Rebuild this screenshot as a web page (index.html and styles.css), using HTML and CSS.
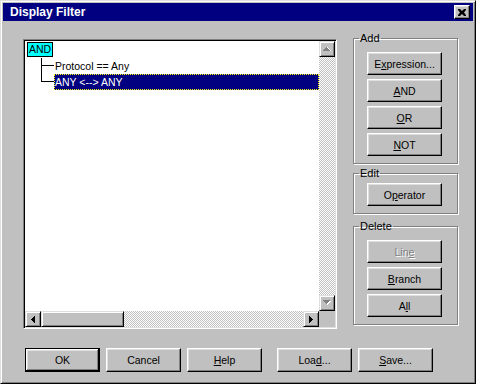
FILE: index.html
```html
<!DOCTYPE html>
<html lang="en">
<head>
    <meta charset="UTF-8">
    <meta name="viewport" content="width=device-width, initial-scale=1.0">
    <title>Display Filter</title>
    <link rel="stylesheet" href="styles.css">
</head>
<body>

<div class="window">
    <div class="titlebar">
        <span class="title">Display Filter</span>
        <button class="close-btn" aria-label="Close">
            <svg width="8" height="7" viewBox="0 0 8 7">
                <path d="M0 0h2l2 2 2-2h2v1L6 3.5 8 6v1H6L4 5 2 7H0V6l2-2.5L0 1z" fill="#000"/>
            </svg>
        </button>
    </div>

    <div class="dialog-body">
        <div class="main-row">
            <div class="tree-view">
                <div class="tree">
                    <div class="tree-row root-row"><span class="root-label">AND</span></div>
                    <div class="tree-row child">
                        <span class="label">Protocol == Any</span>
                    </div>
                    <div class="tree-row child last">
                        <span class="label selected">ANY &lt;--&gt; ANY</span>
                    </div>
                </div>

                <div class="vscroll">
                    <div class="scroll-btn">
                        <svg width="9" height="6" viewBox="0 0 9 6">
                            <path d="M4 1h1v1h1v1h1v1h1v1H1V4h1V3h1V2h1z" fill="#fff"/>
                            <path d="M3 1h1v1h1v1h1v1h1v1H0V4h1V3h1V2h1z" fill="#808080"/>
                        </svg>
                    </div>
                    <div class="track"></div>
                    <div class="scroll-btn">
                        <svg width="9" height="6" viewBox="0 0 9 6">
                            <path d="M1 1h7v1H7v1H6v1H5v1H4V4H3V3H2V2H1z" fill="#fff"/>
                            <path d="M0 0h7v1H6v1H5v1H4v1H3V3H2V2H1V1H0z" fill="#808080"/>
                        </svg>
                    </div>
                </div>

                <div class="hscroll">
                    <div class="scroll-btn">
                        <svg width="4" height="7" viewBox="0 0 4 7">
                            <path d="M3 0h1v7H3V6H2V5H1V4H0V3h1V2h1V1h1z" fill="#000"/>
                        </svg>
                    </div>
                    <div class="thumb"></div>
                    <div class="track"></div>
                    <div class="scroll-btn">
                        <svg width="4" height="7" viewBox="0 0 4 7">
                            <path d="M0 0h1v1h1v1h1v1h1v1H3v1H2v1H1v1H0z" fill="#000"/>
                        </svg>
                    </div>
                </div>

                <div class="corner"></div>
            </div>

            <div class="side">
                <fieldset class="group">
                    <legend>Add</legend>
                    <button class="btn">E<u>x</u>pression...</button>
                    <button class="btn"><u>A</u>ND</button>
                    <button class="btn"><u>O</u>R</button>
                    <button class="btn"><u>N</u>OT</button>
                </fieldset>

                <fieldset class="group group-edit">
                    <legend>Edit</legend>
                    <button class="btn">O<u>p</u>erator</button>
                </fieldset>

                <fieldset class="group group-delete">
                    <legend>Delete</legend>
                    <button class="btn" disabled>Lin<u>e</u></button>
                    <button class="btn"><u>B</u>ranch</button>
                    <button class="btn">A<u>l</u>l</button>
                </fieldset>
            </div>
        </div>

        <div class="button-row">
            <button class="btn btn-default">OK</button>
            <button class="btn">Cancel</button>
            <button class="btn"><u>H</u>elp</button>
            <button class="btn btn-gap">Loa<u>d</u>...</button>
            <button class="btn"><u>S</u>ave...</button>
        </div>
    </div>
</div>

</body>
</html>
```

FILE: styles.css
```css
body {
    margin: 0;
    background-color: #fff;
    font-family: "Liberation Sans", Arial, sans-serif;
    font-size: 10.5px;
    color: #000;
}

.window {
    box-sizing: border-box;
    width: 476px;
    height: 384px;
    padding: 2px;
    background-color: #c0c0c0;
    border: 1px solid;
    border-color: #dfdfdf #000 #000 #dfdfdf;
    box-shadow: inset 1px 1px #fff, inset -1px -1px #808080;
}

.titlebar {
    display: flex;
    align-items: center;
    justify-content: space-between;
    height: 18px;
    padding: 0 3px 0 7px;
    background-color: #000080;
    color: #fff;
}

.title {
    font-weight: bold;
    font-size: 12px;
}

.close-btn {
    display: flex;
    align-items: center;
    justify-content: center;
    box-sizing: border-box;
    width: 16px;
    height: 14px;
    padding: 0;
    background-color: #c0c0c0;
    border: 1px solid;
    border-color: #fff #000 #000 #fff;
    box-shadow: inset -1px -1px #808080, inset 1px 1px #dfdfdf;
}

.dialog-body {
    padding: 11px 0 0 20px;
}

.main-row {
    display: flex;
    align-items: flex-start;
    gap: 16px;
}

/* tree view with its scroll bars */
.tree-view {
    box-sizing: border-box;
    width: 314px;
    height: 290px;
    margin-top: 7px;
    padding: 1px;
    border: 1px solid;
    border-color: #808080 #fff #fff #808080;
    box-shadow: inset 1px 1px #000, inset -1px -1px #dfdfdf;
    display: grid;
    grid-template-columns: 1fr 16px;
    grid-template-rows: 1fr 16px;
}

.tree {
    background-color: #fff;
    padding-top: 1px;
}

.tree-row {
    height: 16px;
    position: relative;
}

.root-row {
    padding-left: 2px;
}

.root-label {
    display: inline-block;
    box-sizing: border-box;
    height: 15px;
    line-height: 13px;
    padding: 0 1px;
    background-color: #00ffff;
    border: 1px solid #000;
}

.child {
    padding-left: 29px;
}

.child::before {
    content: "";
    position: absolute;
    left: 16px;
    top: 0;
    width: 1px;
    height: 16px;
    background-color: #000;
}

.child.last::before {
    height: 8px;
}

.child::after {
    content: "";
    position: absolute;
    left: 16px;
    top: 7px;
    width: 13px;
    height: 1px;
    background-color: #000;
}

.label {
    display: block;
    box-sizing: border-box;
    height: 16px;
    line-height: 14px;
    border: 1px solid transparent;
}

.label.selected {
    background-color: #000080;
    color: #fff;
    border: 1px dotted #ffff00;
}

.vscroll {
    display: flex;
    flex-direction: column;
}

.hscroll {
    display: flex;
}

.track {
    flex: 1;
    background: repeating-conic-gradient(#c0c0c0 0 25%, #fff 0 50%) 0 0 / 2px 2px;
}

.scroll-btn,
.thumb {
    box-sizing: border-box;
    width: 16px;
    height: 16px;
    display: flex;
    align-items: center;
    justify-content: center;
    background-color: #c0c0c0;
    border: 1px solid;
    border-color: #dfdfdf #000 #000 #dfdfdf;
    box-shadow: inset 1px 1px #fff, inset -1px -1px #808080;
}

.thumb {
    width: 83px;
}

.corner {
    background-color: #c0c0c0;
}

/* right hand groups */
.side {
    display: flex;
    flex-direction: column;
}

.group {
    box-sizing: border-box;
    width: 105px;
    margin: 0;
    padding: 8px 0 7px 13px;
    border: 1px solid #808080;
    box-shadow: inset 1px 1px #fff, 1px 1px #fff;
    display: flex;
    flex-direction: column;
    gap: 4px;
}

.group legend {
    padding: 0 1px;
    margin-left: -8px;
    line-height: 12px;
    font-size: 11px;
}

.group-edit {
    margin-top: 3px;
    padding-top: 4px;
}

.group-delete {
    margin-top: 6px;
}

.btn {
    box-sizing: border-box;
    width: 75px;
    height: 23px;
    padding: 0;
    font-family: inherit;
    font-size: 10.5px;
    color: #000;
    background-color: #c0c0c0;
    border: 1px solid;
    border-color: #fff #000 #000 #fff;
    box-shadow: inset -1px -1px #808080, inset 1px 1px #dfdfdf;
}

.btn:disabled {
    color: #808080;
    text-shadow: 1px 1px #fff;
}

.button-row {
    display: flex;
    gap: 6px;
    margin-top: 19px;
    padding-left: 2px;
}

.button-row .btn {
    height: 24px;
}

.btn-default {
    border: 1px solid #000;
    box-shadow: inset -1px -1px #000, inset 1px 1px #fff, inset -2px -2px #808080, inset 2px 2px #dfdfdf;
}

.btn-gap {
    margin-left: 9px;
}
```
